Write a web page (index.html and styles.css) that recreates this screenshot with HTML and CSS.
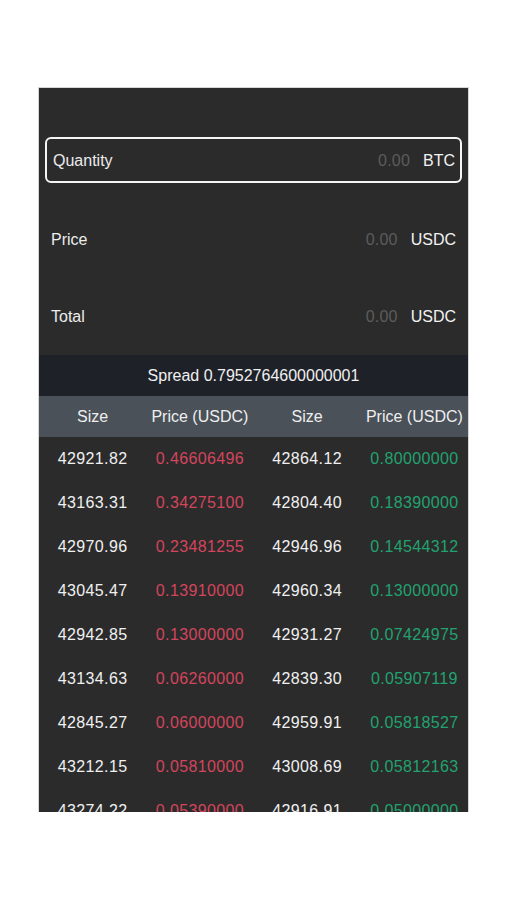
FILE: index.html
```html
<!DOCTYPE html>
<html>
<head>
<meta charset="utf-8">
<link rel="stylesheet" href="styles.css">
</head>
<body>
<div class="panel">
  <div class="form">
    <div class="field focused">
      <span class="label">Quantity</span>
      <span class="value"><span class="ph">0.00</span><span class="unit">BTC</span></span>
    </div>
    <div class="field">
      <span class="label">Price</span>
      <span class="value"><span class="ph">0.00</span><span class="unit">USDC</span></span>
    </div>
    <div class="field">
      <span class="label">Total</span>
      <span class="value"><span class="ph">0.00</span><span class="unit">USDC</span></span>
    </div>
  </div>
  <div class="spread">Spread 0.7952764600000001</div>
  <div class="grid head">
    <span>Size</span><span>Price (USDC)</span><span>Size</span><span>Price (USDC)</span>
  </div>
  <div class="book">
    <div class="grid row"><span>42921.82</span><span class="ask">0.46606496</span><span>42864.12</span><span class="bid">0.80000000</span></div>
    <div class="grid row"><span>43163.31</span><span class="ask">0.34275100</span><span>42804.40</span><span class="bid">0.18390000</span></div>
    <div class="grid row"><span>42970.96</span><span class="ask">0.23481255</span><span>42946.96</span><span class="bid">0.14544312</span></div>
    <div class="grid row"><span>43045.47</span><span class="ask">0.13910000</span><span>42960.34</span><span class="bid">0.13000000</span></div>
    <div class="grid row"><span>42942.85</span><span class="ask">0.13000000</span><span>42931.27</span><span class="bid">0.07424975</span></div>
    <div class="grid row"><span>43134.63</span><span class="ask">0.06260000</span><span>42839.30</span><span class="bid">0.05907119</span></div>
    <div class="grid row"><span>42845.27</span><span class="ask">0.06000000</span><span>42959.91</span><span class="bid">0.05818527</span></div>
    <div class="grid row"><span>43212.15</span><span class="ask">0.05810000</span><span>43008.69</span><span class="bid">0.05812163</span></div>
    <div class="grid row"><span>43274.22</span><span class="ask">0.05390000</span><span>42916.91</span><span class="bid">0.05000000</span></div>
  </div>
</div>
</body>
</html>
```
FILE: styles.css
```css
html, body {
  margin: 0;
  padding: 0;
  background: #ffffff;
}
body {
  font-family: "Liberation Sans", Arial, sans-serif;
  font-size: 16px;
  color: #ececec;
}
.panel {
  box-sizing: border-box;
  margin: 88px 0 0 39px;
  width: 429px;
  height: 724px;
  background: #2b2b2b;
  overflow: hidden;
  box-shadow: 0 0 0 1px #d6d6d6;
}
.form {
  display: flex;
  flex-direction: column;
  padding: 49px 0 15px;
}
.field {
  display: flex;
  align-items: center;
  justify-content: space-between;
  height: 46px;
  box-sizing: border-box;
  margin: 0 6px;
  border: 2px solid transparent;
  border-radius: 6px;
  padding: 0 4px 0 4px;
}
.field + .field {
  margin-top: 34px;
}
.field + .field + .field {
  margin-top: 31px;
}
.field.focused {
  border-color: #f4f4f4;
  padding: 2px 5px 0 6px;
}
.value {
  display: flex;
  align-items: center;
  gap: 13px;
}
.ph {
  color: #5c5c5c;
  letter-spacing: 0.2px;
}
.unit {
  color: #f2f2f2;
}
.spread {
  height: 41px;
  display: flex;
  align-items: center;
  justify-content: center;
  background: #1e2128;
  color: #f0f0f0;
}
.grid {
  display: grid;
  grid-template-columns: repeat(4, 1fr);
  text-align: center;
  align-items: center;
}
.head {
  height: 41px;
  background: #4a5159;
  color: #eeeeee;
}
.row {
  height: 44px;
  color: #f0f0f0;
  letter-spacing: 0.35px;
}
.ask {
  color: #d3455c;
}
.bid {
  color: #22a270;
}
```
